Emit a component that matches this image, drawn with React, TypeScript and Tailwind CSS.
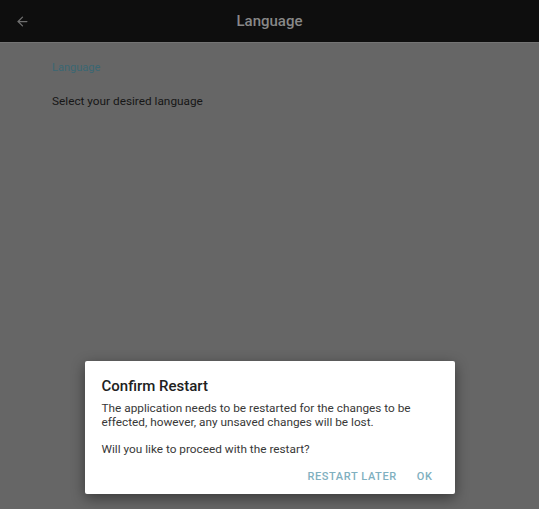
import { ArrowLeft } from 'lucide-react'

export default function App() {
    return (
        <div className="relative h-[509px] w-full overflow-hidden bg-[#666666] font-['Roboto',sans-serif]">
            {/* Top bar */}
            <header className="flex h-[43px] items-center border-b border-[#747474] bg-[#0e0e0e] px-[15px]">
                <ArrowLeft size={15} strokeWidth={2} className="text-[#6f6f6f]" />
                <h1 className="flex-1 pr-[15px] pt-[1px] text-center text-[15px] font-medium text-[#888888]">Language</h1>
            </header>

            {/* Page content */}
            <div className="px-[52px] pt-[17px]">
                <div className="text-[11px] text-[#3a6673]">Language</div>
                <div className="mt-[16px] text-[11.8px] text-[#161616]">Select your desired language</div>
            </div>

            {/* Dialog */}
            <div className="absolute bottom-[15px] left-1/2 w-[370px] -translate-x-1/2 rounded-[2px] bg-white px-[17px] pt-[14px] pb-[9px] shadow-[0_4px_14px_rgba(0,0,0,0.45)]">
                <h2 className="text-[15px] font-medium text-[#212121]">Confirm Restart</h2>
                <p className="mt-[3px] text-[11.8px] leading-[14px] text-[#383838]">
                    The application needs to be restarted for the changes to be effected, however, any unsaved changes will be lost.
                </p>
                <p className="mt-[13px] text-[11.8px] leading-[14px] text-[#383838]">Will you like to proceed with the restart?</p>
                <div className="mt-[13px] flex justify-end gap-[20px] pr-[5px]">
                    <button className="text-[11px] font-medium tracking-[0.6px] text-[#7fb0c0]">RESTART LATER</button>
                    <button className="text-[11px] font-medium tracking-[0.6px] text-[#7fb0c0]">OK</button>
                </div>
            </div>
        </div>
    )
}
